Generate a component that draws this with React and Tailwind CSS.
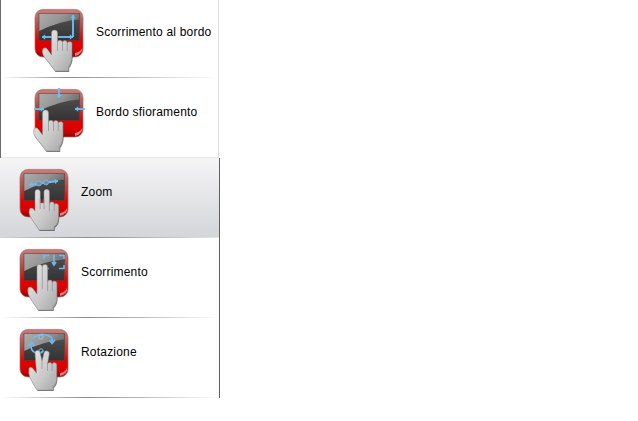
const BLUE = "#6cbcf4";

function Tile({ id }) {
  return (
    <g>
      <defs>
        <linearGradient id={id + "t"} x1="0" y1="0" x2="0" y2="1">
          <stop offset="0" stopColor="#c4807c" />
          <stop offset="0.35" stopColor="#a8504c" />
          <stop offset="0.64" stopColor="#e00404" />
          <stop offset="0.85" stopColor="#d80000" />
          <stop offset="1" stopColor="#920505" />
        </linearGradient>
        <linearGradient id={id + "g"} x1="0" y1="0" x2="1" y2="0.4">
          <stop offset="0" stopColor="#adadad" />
          <stop offset="0.6" stopColor="#929292" />
          <stop offset="1" stopColor="#6c6c6c" />
        </linearGradient>
        <linearGradient id={id + "s"} x1="0" y1="0" x2="0" y2="1">
          <stop offset="0" stopColor="#525252" />
          <stop offset="1" stopColor="#333333" />
        </linearGradient>
        <linearGradient id={id + "h"} x1="0" y1="0" x2="1" y2="1">
          <stop offset="0" stopColor="#e8e8e8" />
          <stop offset="0.6" stopColor="#c8c8c8" />
          <stop offset="1" stopColor="#a6a6a6" />
        </linearGradient>
        <filter id={id + "b"} x="-10%" y="-10%" width="120%" height="120%">
          <feGaussianBlur stdDeviation="0.35" />
        </filter>
        <filter id={id + "e"} x="-10%" y="-10%" width="120%" height="120%">
          <feGaussianBlur stdDeviation="0.7" />
        </filter>
      </defs>
      <rect x="0" y="0.4" width="48" height="47.6" rx="8" fill={`url(#${id}t)`} stroke="#a86a66" strokeWidth="0.7" />
      <rect x="4" y="4.5" width="40.5" height="27" fill={`url(#${id}s)`} stroke="#7a3330" strokeWidth="0.6" />
      <path d="M4.3 4.8 H44.2 V10.5 Q24 12 4.3 22 Z" fill={`url(#${id}g)`} filter={`url(#${id}e)`} />
      <path d="M40 47 Q47 46 47.5 38 Q46 43 40 44 Z" fill="#ffd0d0" opacity="0.6" />
    </g>
  );
}

function Arrow({ x1, y1, x2, y2, both }) {
  const a = Math.atan2(y2 - y1, x2 - x1);
  const head = (x, y, ang) => {
    const s = 4.2;
    const p = [
      [x, y],
      [x - s * Math.cos(ang - 0.7), y - s * Math.sin(ang - 0.7)],
      [x - s * Math.cos(ang + 0.7), y - s * Math.sin(ang + 0.7)],
    ];
    return <polygon points={p.map((q) => q.join(",")).join(" ")} fill={BLUE} />;
  };
  return (
    <g>
      <line x1={x1} y1={y1} x2={x2} y2={y2} stroke={BLUE} strokeWidth="1.9" />
      {head(x2, y2, a)}
      {both && head(x1, y1, a + Math.PI)}
    </g>
  );
}

function Hand({ id, d, lines, dx = 0 }) {
  return (
    <g transform={`translate(${dx} 0)`} filter={`url(#${id}b)`}>
      <path d={d} fill="#3c3c3c" opacity="0.7" transform="translate(0.7 1)" />
      <path d={d} fill={`url(#${id}h)`} stroke="#8a8a8a" strokeWidth="0.5" />
      <path d={lines} fill="none" stroke="#8f8f8f" strokeWidth="0.7" />
    </g>
  );
}

const ONE =
  "M16.5 24 a3 3 0 0 1 6 0 V33 a2.6 2.6 0 0 1 5 0.5 a2.4 2.4 0 0 1 4.7 1 a2.4 2.4 0 0 1 4.8 1.5 V47 Q37 54 33.5 58 V62 H20 Q15 55 10 49 Q6 44 8 39.5 Q11 37.5 13 41 L16.5 46 Z";
const ONE_L = "M22.5 33 V42 M27.5 34 V42 M32.2 35 V42";
const TWO =
  "M15 23 a2.6 2.6 0 0 1 5.2 0 V34 H24 V23 a2.7 2.7 0 0 1 5.4 0 V35 a2.4 2.4 0 0 1 4.8 1 a2.3 2.3 0 0 1 4.4 1 V48 Q38.5 55 34 58 V61 H19 Q15 55 11 49 Q8 44 9.5 40 Q12.5 37.5 15 42 Z";
const TWO_L = "M20.2 30 V40 M24 30 V40 M29.4 35 V42 M34.2 36 V42";
const SCROLL =
  "M17 18 a2.6 2.6 0 0 1 5.2 0 a2.7 2.7 0 0 1 5.4 0.5 V33 a2.4 2.4 0 0 1 4.7 1 a2.3 2.3 0 0 1 4.6 1 V48 Q37 55 33 58 V61 H18 Q14 55 10 49 Q7 44 8 39 Q11 36.5 14 41 L17 45 Z";
const SCROLL_L = "M22.3 18 V40 M27.6 33 V42 M32.3 34 V42";
const ROT =
  "M15 24 a2.6 2.6 0 0 1 5.2 0 L22 32 L24 24 a2.6 2.6 0 0 1 5.2 1 L27.5 35 a2.4 2.4 0 0 1 4.6 0.5 a2.3 2.3 0 0 1 4.6 1 V48 Q37 55 33 58 V61 H17 Q13 55 10 49 Q8 44 9 39 Q12 37 14 41 L16.5 44 Z";
const ROT_L = "M22 32 V40 M27.5 35 V42 M32.1 35.5 V42";

function Icon({ kind }) {
  const id = "i" + kind;
  return (
    <svg width="48" height="48" viewBox="0 0 48 48" className="shrink-0 overflow-visible">
      <Tile id={id} />
      {kind === "edge" && (
        <g>
          <Arrow x1={7} y1={28} x2={38} y2={28} both />
          <Arrow x1={38} y1={28} x2={38} y2={6} />
        </g>
      )}
      {kind === "edgeTouch" && (
        <g>
          <Arrow x1={24} y1={-1} x2={24} y2={9} />
          <Arrow x1={-1} y1={20} x2={9} y2={20} />
          <Arrow x1={50} y1={20} x2={40} y2={20} />
        </g>
      )}
      {kind === "zoom" && (
        <g>
          <Arrow x1={9} y1={16} x2={38} y2={12} both />
          <circle cx="19" cy="14.5" r="2.4" fill="#888" stroke={BLUE} strokeWidth="1" />
          <circle cx="26" cy="13.5" r="2.4" fill="#888" stroke={BLUE} strokeWidth="1" />
        </g>
      )}
      {kind === "scroll" && (
        <g fill="none" stroke={BLUE} strokeWidth="1.6">
          <path d="M24 10 V6.5 H29 M39 6.5 H44 V10 M24 16 V19.5 H29 M39 19.5 H44 V16" />
          <path d="M34 6 V16" />
          <path d="M32 13 L34 16 L36 13" />
        </g>
      )}
      {kind === "rotate" && (
        <g fill="none" stroke={BLUE} strokeWidth="1.6">
          <path d="M13 9 Q22 2 31 8 Q33 10 32 13" />
          <path d="M29.5 11 L32 14.5 L35 11" />
          <path d="M11 15 Q10 22 16 24 Q20 25 23 22" />
          <path d="M8.5 17 L11.5 13 L14.5 17" />
          <circle cx="21" cy="8" r="2.2" stroke="#9cc4e0" strokeWidth="1" />
          <circle cx="21" cy="22" r="2.2" strokeWidth="1" />
        </g>
      )}
      {kind === "edge" && <Hand id={id} d={ONE} lines={ONE_L} />}
      {kind === "edgeTouch" && <Hand id={id} d={ONE} lines={ONE_L} dx={-9} />}
      {kind === "zoom" && <Hand id={id} d={TWO} lines={TWO_L} />}
      {kind === "scroll" && <Hand id={id} d={SCROLL} lines={SCROLL_L} />}
      {kind === "rotate" && <Hand id={id} d={ROT} lines={ROT_L} />}
    </svg>
  );
}

function Row({ kind, label, className, contentClass, dividerClass }) {
  return (
    <div className={"flex flex-col justify-between " + className}>
      <div className={"flex items-center gap-[13px] " + contentClass}>
        <Icon kind={kind} />
        <span className="text-[12px] leading-[14px] tracking-[0.2px] text-black [font-family:'Liberation_Sans',Arial,sans-serif] -mt-[2px]">
          {label}
        </span>
      </div>
      <div className={"h-px " + dividerClass} />
    </div>
  );
}

export default function App() {
  return (
    <div className="w-[638px] h-[421px] bg-white overflow-hidden">
      <div className="w-[220px] flex flex-col">
        <Row
          kind="edge"
          label="Scorrimento al bordo"
          className="w-[219px] h-[78px] border-l border-l-[#6b6b6b] border-r border-r-[#dcdcdc]"
          contentClass="pl-[34px] pt-[9px]"
          dividerClass="bg-gradient-to-r from-transparent via-[#8a8a8a] via-30% to-transparent"
        />
        <Row
          kind="edgeTouch"
          label="Bordo sfioramento"
          className="w-[219px] h-[80px] border-l border-l-[#6b6b6b] border-r border-r-[#dcdcdc]"
          contentClass="pl-[34px] pt-[11px]"
          dividerClass="bg-[#e8e8e8]"
        />
        <Row
          kind="zoom"
          label="Zoom"
          className="w-[220px] h-[80px] border-r border-r-[#5e5e5e] bg-gradient-to-b from-[#f5f5f6] to-[#d4d5d9]"
          contentClass="pl-[20px] pt-[11px]"
          dividerClass="bg-gradient-to-r from-[#d4d5d9] via-[#8a8a8a] via-40% to-[#e8e8e8]"
        />
        <Row
          kind="scroll"
          label="Scorrimento"
          className="w-[220px] h-[80px] border-r border-r-[#5e5e5e]"
          contentClass="pl-[20px] pt-[11px]"
          dividerClass="bg-gradient-to-r from-transparent via-[#8a8a8a] via-40% to-transparent"
        />
        <Row
          kind="rotate"
          label="Rotazione"
          className="w-[220px] h-[80px] border-r border-r-[#5e5e5e]"
          contentClass="pl-[20px] pt-[11px]"
          dividerClass="bg-gradient-to-r from-transparent via-[#8a8a8a] via-40% to-transparent"
        />
      </div>
    </div>
  );
}
